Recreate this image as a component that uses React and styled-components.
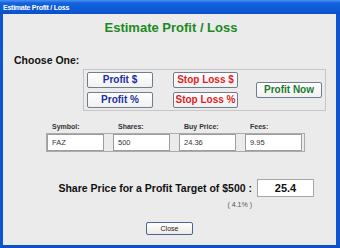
import React from "react";
import styled, { createGlobalStyle } from "styled-components";

const GlobalStyle = createGlobalStyle`
  html, body {
    margin: 0;
    padding: 0;
    background: #ebebeb;
  }
  body {
    font-family: "Liberation Sans", Arial, sans-serif;
  }
  * {
    box-sizing: border-box;
  }
`;

const tones = {
  blue: "#1a2ea6",
  red: "#e01c24",
  green: "#1c7a30",
};

const Window = styled.div`
  width: 340px;
  height: 248px;
  display: flex;
  flex-direction: column;
`;

const TitleBar = styled.div`
  height: 14px;
  padding-left: 3px;
  display: flex;
  align-items: center;
  color: #ffffff;
  font-weight: bold;
  font-size: 7px;
  letter-spacing: -0.25px;
  background: linear-gradient(
    #4a92f5 0px,
    #1462dc 3px,
    #0d59d6 10px,
    #0b50c6 14px
  );
`;

const Body = styled.div`
  flex: 1;
  display: flex;
  flex-direction: column;
  background: #ebebeb;
  border-left: 3px solid #0f55cf;
  border-right: 4px solid #0f55cf;
  border-bottom: 3px solid #0d4fc4;
  padding-top: 6px;
`;

const Heading = styled.div`
  text-align: center;
  padding-left: 3px;
  color: #1b8a22;
  font-weight: bold;
  font-size: 13px;
  line-height: 15px;
`;

const ChooseLabel = styled.div`
  margin: 19px 0 2px 11px;
  font-weight: bold;
  font-size: 10.5px;
  line-height: 13px;
  color: #111111;
`;

const ChoiceGroup = styled.div`
  margin-left: 80px;
  width: 243px;
  display: flex;
  align-items: center;
  gap: 20px;
  padding: 2px 3px;
  border: 1px solid #c6c6c6;
`;

const ButtonColumn = styled.div`
  display: flex;
  flex-direction: column;
  gap: 4px;
  margin-right: ${(p) => p.$after || 0}px;
`;

const ChoiceButton = styled.button`
  width: ${(p) => p.$w}px;
  height: 16px;
  padding: 0;
  border: 1px solid #6f7e8e;
  border-radius: 2px;
  background: linear-gradient(#ffffff, #f1f1f1);
  color: ${(p) => tones[p.$tone]};
  font-family: "Liberation Sans", Arial, sans-serif;
  font-weight: bold;
  font-size: 10px;
  line-height: 14px;
  white-space: nowrap;
`;

const FieldLabels = styled.div`
  display: grid;
  grid-template-columns: repeat(4, 57px);
  column-gap: 9px;
  margin: 11px 0 2px 43px;
  padding-left: 6px;
  font-weight: bold;
  font-size: 7px;
  line-height: 9px;
  color: #333333;
`;

const FieldPanel = styled.div`
  margin-left: 43px;
  width: fit-content;
  display: grid;
  grid-template-columns: repeat(4, 57px);
  column-gap: 9px;
  padding-right: 2px;
  border: 1px solid #ababab;
`;

const Field = styled.input`
  width: 57px;
  height: 17px;
  padding: 0 4px;
  border: 1px solid #9d9d9d;
  background: #ffffff;
  color: #333333;
  font-family: "Liberation Sans", Arial, sans-serif;
  font-size: 7.5px;
  outline: none;
`;

const ResultRow = styled.div`
  margin-top: 27px;
  display: flex;
  justify-content: flex-end;
  align-items: flex-start;
  gap: 5px;
  padding-right: 22px;
`;

const ResultText = styled.div`
  display: flex;
  flex-direction: column;
  align-items: flex-end;
`;

const ResultLabel = styled.div`
  font-weight: bold;
  font-size: 10.5px;
  line-height: 18px;
  color: #111111;
  white-space: nowrap;
`;

const Percent = styled.div`
  margin-top: 3px;
  font-size: 7px;
  line-height: 9px;
  color: #555555;
  white-space: pre;
`;

const ResultBox = styled.div`
  width: 57px;
  height: 18px;
  display: flex;
  align-items: center;
  justify-content: center;
  border: 1px solid #a6a6a6;
  background: #ffffff;
  font-weight: bold;
  font-size: 11px;
  color: #111111;
`;

const Footer = styled.div`
  margin-top: 13px;
  display: flex;
  justify-content: center;
`;

const CloseButton = styled.button`
  width: 47px;
  height: 13px;
  padding: 0;
  border: 1px solid #4a6496;
  border-radius: 2px;
  background: linear-gradient(#ffffff, #ecebe6);
  font-family: "Liberation Sans", Arial, sans-serif;
  font-size: 7px;
  line-height: 11px;
  color: #222222;
`;

const fields = [
  { label: "Symbol:", value: "FAZ" },
  { label: "Shares:", value: "500" },
  { label: "Buy Price:", value: "24.36" },
  { label: "Fees:", value: "9.95" },
];

export default function App() {
  return (
    <Window>
      <GlobalStyle />
      <TitleBar>Estimate Profit / Loss</TitleBar>
      <Body>
        <Heading>Estimate Profit / Loss</Heading>
        <ChooseLabel>Choose One:</ChooseLabel>
        <ChoiceGroup>
          <ButtonColumn>
            <ChoiceButton $tone="blue" $w={66}>Profit $</ChoiceButton>
            <ChoiceButton $tone="blue" $w={66}>Profit %</ChoiceButton>
          </ButtonColumn>
          <ButtonColumn $after={-2}>
            <ChoiceButton $tone="red" $w={65}>Stop Loss $</ChoiceButton>
            <ChoiceButton $tone="red" $w={65}>Stop Loss %</ChoiceButton>
          </ButtonColumn>
          <ChoiceButton $tone="green" $w={66}>Profit Now</ChoiceButton>
        </ChoiceGroup>

        <FieldLabels>
          {fields.map((f) => (
            <span key={f.label}>{f.label}</span>
          ))}
        </FieldLabels>
        <FieldPanel>
          {fields.map((f) => (
            <Field key={f.label} readOnly defaultValue={f.value} />
          ))}
        </FieldPanel>

        <ResultRow>
          <ResultText>
            <ResultLabel>Share Price for a Profit Target of $500 :</ResultLabel>
            <Percent>( 4.1% )</Percent>
          </ResultText>
          <ResultBox>25.4</ResultBox>
        </ResultRow>

        <Footer>
          <CloseButton>Close</CloseButton>
        </Footer>
      </Body>
    </Window>
  );
}
